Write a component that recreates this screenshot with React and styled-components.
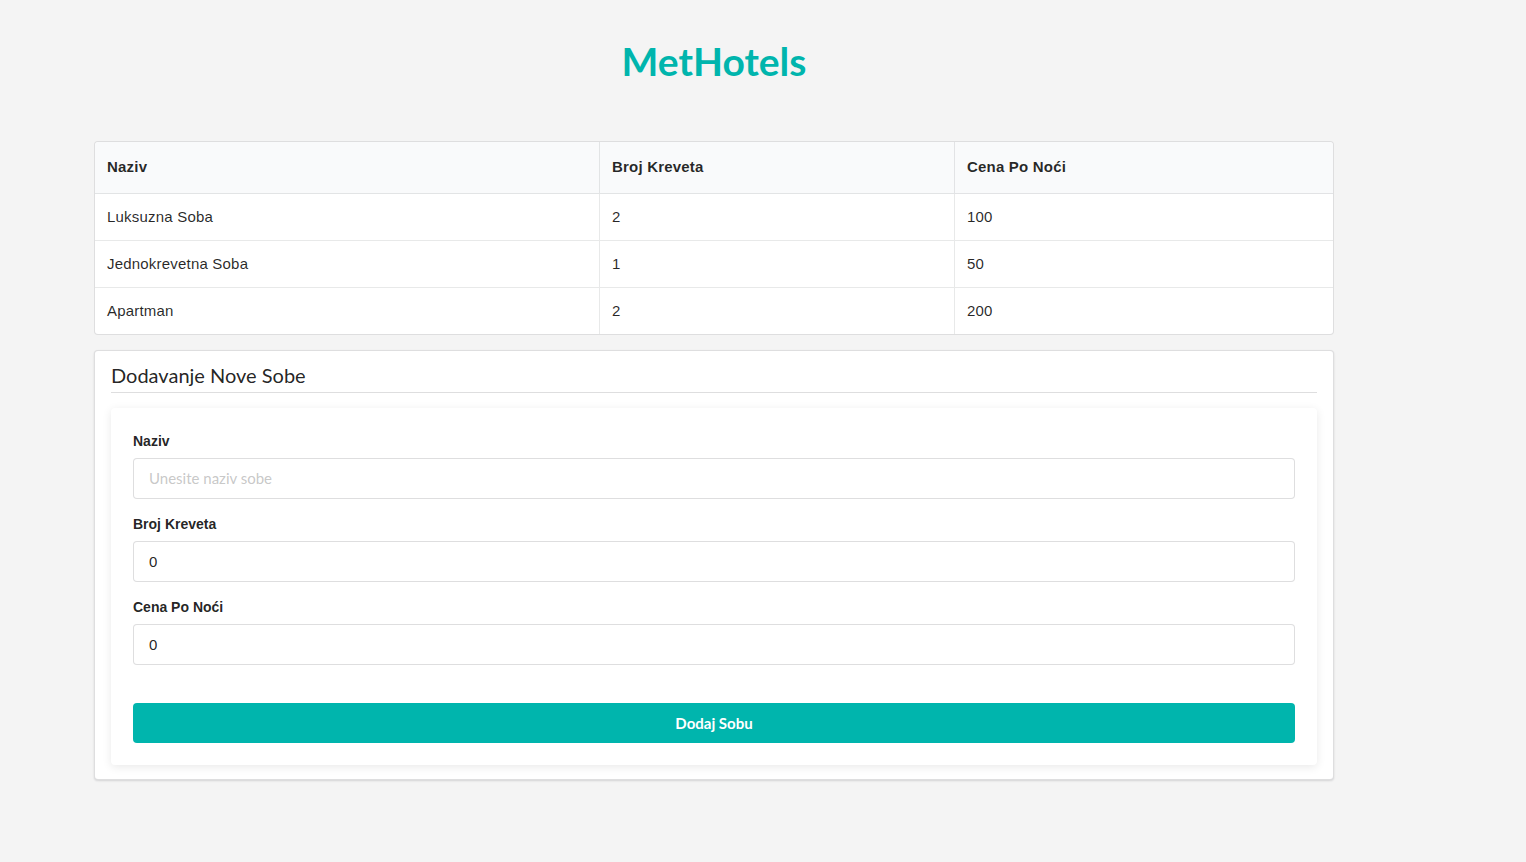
import React from "react";
import styled, { createGlobalStyle } from "styled-components";

const Global = createGlobalStyle`
  html, body { margin: 0; padding: 0; background: #f4f4f4; }
  body { font-family: "Liberation Sans", Arial, sans-serif; color: rgba(0,0,0,.87); }
  * { box-sizing: border-box; }
`;

const Page = styled.div`
  width: 1240px;
  margin-left: 94px;
  padding-top: 38px;
  padding-bottom: 80px;
`;

const Title = styled.h1`
  margin: 0 0 57px;
  font-family: Lato, sans-serif;
  font-weight: 700;
  font-size: 39px;
  line-height: 46px;
  color: #00b5ad;
  text-align: center;
`;

const Table = styled.table`
  width: 100%;
  table-layout: fixed;
  border-collapse: separate;
  border-spacing: 0;
  background: #fff;
  border: 1px solid rgba(34,36,38,.15);
  border-radius: 4px;
  font-size: 15px;
  letter-spacing: 0.2px;
  color: rgba(0,0,0,.85);
`;

const Col = styled.col`
  width: ${(p) => (p.$w ? `${p.$w}px` : "auto")};
`;

const Th = styled.th`
  background: #f9fafb;
  text-align: left;
  font-weight: 700;
  font-size: 15px;
  height: 52px;
  padding: 0 12px 2px;
  border-bottom: 1px solid rgba(34,36,38,.1);
  border-left: ${(p) => (p.$first ? "none" : "1px solid rgba(34,36,38,.1)")};
  &:first-child { border-top-left-radius: 4px; }
  &:last-child { border-top-right-radius: 4px; }
`;

const Td = styled.td`
  height: ${(p) => (p.$top ? "46px" : "47px")};
  padding: 0 12px 2px;
  border-top: ${(p) => (p.$top ? "none" : "1px solid rgba(34,36,38,.1)")};
  border-left: ${(p) => (p.$first ? "none" : "1px solid rgba(34,36,38,.1)")};
`;

const Segment = styled.section`
  margin-top: 15px;
  background: #fff;
  border: 1px solid rgba(34,36,38,.15);
  border-radius: 4px;
  box-shadow: 0 1px 2px 0 rgba(34,36,38,.15);
  padding: 11px 16px 14px 16px;
`;

const SegmentHeader = styled.h3`
  margin: 0 0 15px;
  padding-bottom: 4px;
  border-bottom: 1px solid rgba(34,36,38,.15);
  font-family: Lato, sans-serif;
  font-weight: 400;
  font-size: 20px;
  line-height: 26px;
  color: rgba(0,0,0,.87);
`;

const Card = styled.form`
  background: #fff;
  border-radius: 4px;
  box-shadow: 0 2px 10px rgba(0,0,0,.09);
  padding: 25px 22px 22px;
  display: flex;
  flex-direction: column;
`;

const Field = styled.div`
  display: flex;
  flex-direction: column;
  margin-bottom: 17px;
`;

const Label = styled.label`
  font-size: 14px;
  font-weight: 700;
  line-height: 16px;
  margin-bottom: 9px;
  color: rgba(0,0,0,.87);
`;

const Input = styled.input`
  height: 41px;
  width: 100%;
  padding: 0 15px;
  border: 1px solid rgba(34,36,38,.15);
  border-radius: 4px;
  font-family: "Liberation Sans", Arial, sans-serif;
  font-size: 15px;
  color: rgba(0,0,0,.87);
  background: #fff;
  outline: none;
  &::placeholder {
    font-family: Lato, sans-serif;
    color: rgba(191,191,191,.87);
  }
`;

const Button = styled.button`
  margin-top: 21px;
  height: 40px;
  border: none;
  border-radius: 4px;
  background: #00b5ad;
  color: #fff;
  font-family: Lato, sans-serif;
  font-weight: 700;
  font-size: 15px;
  cursor: pointer;
`;

const rooms = [
  { naziv: "Luksuzna Soba", kreveta: 2, cena: 100 },
  { naziv: "Jednokrevetna Soba", kreveta: 1, cena: 50 },
  { naziv: "Apartman", kreveta: 2, cena: 200 },
];

export default function App() {
  return (
    <Page>
      <Global />
      <Title>MetHotels</Title>
      <Table>
        <colgroup>
          <Col $w={504} />
          <Col $w={355} />
          <Col />
        </colgroup>
        <thead>
          <tr>
            <Th $first>Naziv</Th>
            <Th>Broj Kreveta</Th>
            <Th>Cena Po Noći</Th>
          </tr>
        </thead>
        <tbody>
          {rooms.map((r, i) => (
            <tr key={r.naziv}>
              <Td $first $top={i === 0}>{r.naziv}</Td>
              <Td $top={i === 0}>{r.kreveta}</Td>
              <Td $top={i === 0}>{r.cena}</Td>
            </tr>
          ))}
        </tbody>
      </Table>
      <Segment>
        <SegmentHeader>Dodavanje Nove Sobe</SegmentHeader>
        <Card onSubmit={(e) => e.preventDefault()}>
          <Field>
            <Label>Naziv</Label>
            <Input placeholder="Unesite naziv sobe" />
          </Field>
          <Field>
            <Label>Broj Kreveta</Label>
            <Input type="number" defaultValue="0" />
          </Field>
          <Field>
            <Label>Cena Po Noći</Label>
            <Input type="number" defaultValue="0" />
          </Field>
          <Button type="submit">Dodaj Sobu</Button>
        </Card>
      </Segment>
    </Page>
  );
}
